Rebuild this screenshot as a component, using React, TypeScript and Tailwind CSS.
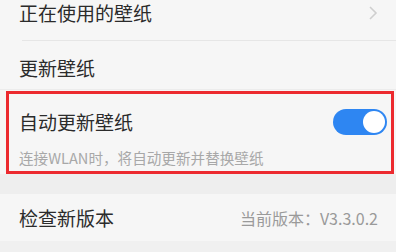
import React from "react";

export default function App() {
  const font = { fontFamily: '"Noto Sans CJK SC", "Noto Sans", sans-serif' };
  return (
    <div className="relative w-[396px] h-[252px] overflow-hidden bg-[#f0f0f0]" style={font}>
      {/* Row 1 */}
      <div className="h-[40px] bg-[#f6f6f6] flex items-start justify-between pl-[19px] pr-[18px]">
        <span className="text-[19px] leading-[26px] text-[#2b2b2b]">正在使用的壁纸</span>
        <svg width="10" height="16" viewBox="0 0 10 16" className="mt-[5px]">
          <path d="M2 2 L8 8 L2 14" fill="none" stroke="#cfcfcf" strokeWidth="1.6" />
        </svg>
      </div>
      <div className="bg-[#f6f6f6] pl-[22px]">
        <div className="h-px bg-[#e6e6e6]" />
      </div>
      {/* Row 2 */}
      <div className="h-[48px] bg-[#f6f6f6] flex items-center pl-[19px] pt-[6px]">
        <span className="text-[19px] leading-[26px] text-[#2b2b2b]">更新壁纸</span>
      </div>
      <div className="h-px bg-[#ececec]" />
      {/* Row 3 */}
      <div className="h-[84px] bg-[#f6f6f6] flex flex-col pl-[19px] pr-[9px]">
        <div className="h-[56px] flex items-center justify-between pt-[8px]">
          <span className="text-[19px] leading-[26px] text-[#2b2b2b]">自动更新壁纸</span>
          <div className="w-[54px] h-[26px] rounded-full bg-[#2e86f2] flex items-center justify-end pr-[2px]">
            <div className="w-[22px] h-[22px] rounded-full bg-white" />
          </div>
        </div>
        <div className="flex-1 flex items-center pb-[4px]">
          <span className="text-[14.6px] leading-[20px] text-[#a8a8a8]">连接WLAN时，将自动更新并替换壁纸</span>
        </div>
      </div>
      {/* Gap */}
      <div className="h-[20px] bg-[#eeeeee]" />
      {/* Row 4 */}
      <div className="h-[47px] bg-[#f6f6f6] flex items-center justify-between pl-[19px] pr-[18px]">
        <span className="text-[19px] leading-[26px] text-[#2b2b2b]">检查新版本</span>
        <span className="text-[16px] leading-[24px] text-[#9a9a9a]">当前版本：V3.3.0.2</span>
      </div>
      {/* Red annotation box */}
      <div className="absolute left-[6px] top-[91px] w-[388px] h-[83px] border-[3px] border-[#ec2a2f] pointer-events-none" />
    </div>
  );
}
